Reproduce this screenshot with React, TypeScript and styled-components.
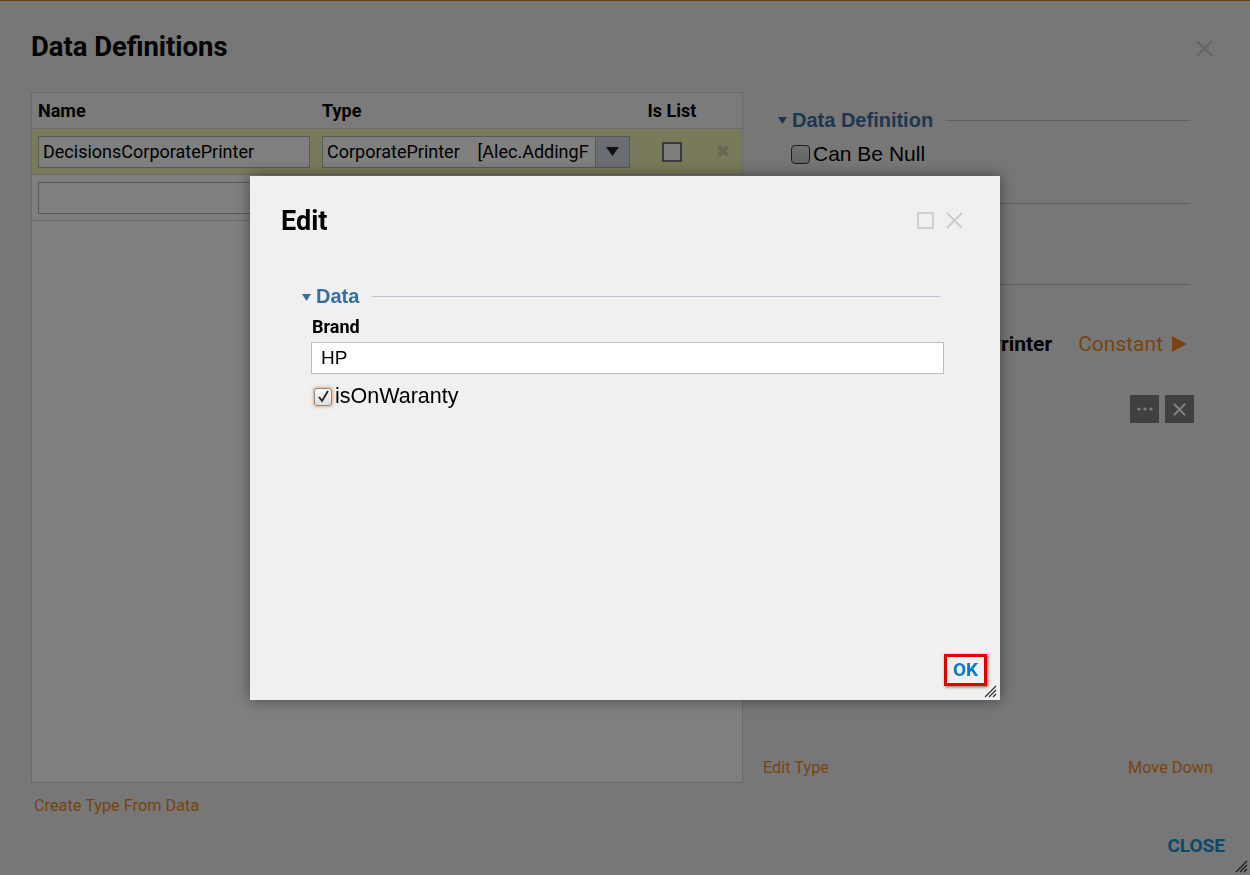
import styled, { createGlobalStyle } from "styled-components";

const GlobalStyle = createGlobalStyle`
  html, body {
    margin: 0;
    padding: 0;
  }
  body {
    font-family: Roboto, "Liberation Sans", Arial, sans-serif;
    background: #eeeeee;
    color: #000;
    overflow: hidden;
  }
  * {
    box-sizing: border-box;
  }
`;

const Page = styled.div`
  position: relative;
  height: 875px;
  border-top: 1px solid #d8801e;
  padding: 0 37px 0 31px;
  display: flex;
  flex-direction: column;
`;

const Header = styled.div`
  height: 91px;
  padding-top: 30px;
  display: flex;
  justify-content: space-between;
  align-items: flex-start;
`;

const Title = styled.h1`
  margin: 0;
  font-size: 27.4px;
  line-height: 32px;
  font-weight: 700;
`;

const IconButton = styled.span<{ $top?: number }>`
  display: inline-flex;
  margin-top: ${(p) => p.$top ?? 0}px;
`;

const Main = styled.div`
  display: grid;
  grid-template-columns: 712px 450px;
  column-gap: 20px;
  height: 691px;
`;

const Table = styled.div`
  border: 1px solid #d4d4d4;
  background: #fefefe;
  display: flex;
  flex-direction: column;
`;

const Row = styled.div<{ $head?: boolean; $selected?: boolean }>`
  display: grid;
  grid-template-columns: 272px 308px 60px 28px;
  column-gap: 12px;
  align-items: center;
  padding-left: 6px;
  height: ${(p) => (p.$head ? 36 : 46)}px;
  background: ${(p) => (p.$selected ? "#f2f2b6" : p.$head ? "#f7f7f7" : "#fefefe")};
  border-bottom: 1px solid #d4d4d4;
`;

const HeadCell = styled.div<{ $center?: boolean }>`
  font-size: 18px;
  font-weight: 700;
  text-align: ${(p) => (p.$center ? "center" : "left")};
`;

const TextInput = styled.div`
  height: 32px;
  border: 1px solid #b0b0b0;
  background: #fff;
  padding: 0 4px;
  font-size: 18px;
  line-height: 30px;
  white-space: nowrap;
  overflow: hidden;
`;

const Select = styled.div`
  height: 32px;
  border: 1px solid #b0b0b0;
  background: #fff;
  display: flex;
  overflow: hidden;
`;

const SelectText = styled.div`
  flex: 1;
  min-width: 0;
  padding: 0 4px;
  font-size: 18px;
  line-height: 30px;
  white-space: pre;
  overflow: hidden;
  text-overflow: clip;
`;

const SelectButton = styled.div`
  width: 34px;
  flex-shrink: 0;
  background: #d4dce4;
  border-left: 1px solid #b0b0b0;
  display: flex;
  align-items: center;
  justify-content: center;
`;

const BoxCheck = styled.div`
  justify-self: center;
  width: 20px;
  height: 20px;
  border: 2px solid #747474;
  background: #fafafa;
`;

const RemoveGlyph = styled.div`
  justify-self: start;
  margin-left: 2px;
  color: #cfcfa4;
  font-size: 17px;
  line-height: 1;
`;

const Side = styled.div`
  display: flex;
  flex-direction: column;
`;

const SectionHeader = styled.div<{ $gap: number; $inset?: number; $endGap?: number }>`
  display: flex;
  align-items: center;
  height: 28px;
  margin-top: ${(p) => p.$gap}px;
  padding-left: ${(p) => p.$inset ?? 15}px;
  margin-right: ${(p) => p.$endGap ?? 23}px;
  color: #3b6ea0;
  font-family: "Liberation Sans", Arial, sans-serif;
  font-size: 20px;
  font-weight: 700;
  white-space: nowrap;
  gap: 5px;

  &::after {
    content: "";
    flex: 1;
    height: 1px;
    margin-left: 8px;
    background: #bfbfcf;
  }
`;

const CheckRow = styled.label<{ $gap: number; $inset: number; $size: number }>`
  display: flex;
  align-items: center;
  gap: 3px;
  height: 24px;
  margin-top: ${(p) => p.$gap}px;
  padding-left: ${(p) => p.$inset}px;
  font-family: "Liberation Sans", Arial, sans-serif;
  font-size: ${(p) => p.$size}px;
`;

const RoundCheck = styled.span`
  width: 19px;
  height: 19px;
  border-radius: 4px;
  border: 1px solid #3a3a3a;
  background: linear-gradient(#e2e2e2, #c8c8c8);
`;

const ValueRow = styled.div`
  display: flex;
  justify-content: flex-end;
  align-items: center;
  gap: 26px;
  height: 28px;
  margin-top: 32px;
  margin-right: 26px;
  white-space: nowrap;
`;

const ValueName = styled.span`
  font-size: 21px;
  font-weight: 700;
`;

const Link = styled.span<{ $size?: number }>`
  display: inline-flex;
  align-items: center;
  gap: 9px;
  color: #f08a24;
  font-size: ${(p) => p.$size ?? 16.3}px;
`;

const ButtonRow = styled.div`
  display: flex;
  justify-content: flex-end;
  gap: 6px;
  margin-top: 37px;
  margin-right: 19px;
`;

const DarkButton = styled.div`
  width: 29px;
  height: 28px;
  background: #808080;
  color: #fff;
  display: flex;
  align-items: center;
  justify-content: center;
`;

const LinksRow = styled.div`
  margin-top: auto;
  margin-bottom: 6px;
  height: 20px;
  display: flex;
  justify-content: space-between;
  align-items: center;
`;

const FooterLink = styled.div`
  height: 20px;
  margin-top: 12px;
  padding-left: 3px;
  display: flex;
  align-items: center;
`;

const CloseRow = styled.div`
  height: 20px;
  margin-top: 20px;
  margin-right: -12px;
  display: flex;
  justify-content: flex-end;
  align-items: center;
`;

const CloseText = styled.span`
  color: #1c90d2;
  font-size: 19px;
  font-weight: 700;
`;

const Grip = styled.div<{ $right: number; $bottom: number }>`
  position: absolute;
  right: ${(p) => p.$right}px;
  bottom: ${(p) => p.$bottom}px;
  display: flex;
`;

const Overlay = styled.div`
  position: fixed;
  inset: 0;
  background: rgba(0, 0, 0, 0.5);
  display: flex;
  align-items: center;
  justify-content: center;
`;

const Modal = styled.div`
  position: relative;
  width: 750px;
  height: 524px;
  background: #f0f0f0;
  box-shadow: 0 0 14px rgba(0, 0, 0, 0.45);
  display: flex;
  flex-direction: column;
`;

const ModalHeader = styled.div`
  padding: 29px 37px 0 31px;
  display: flex;
  justify-content: space-between;
  align-items: center;
`;

const ModalTitle = styled.h2`
  margin: 0;
  font-size: 27px;
  line-height: 32px;
  font-weight: 700;
`;

const ModalTools = styled.div`
  display: flex;
  align-items: center;
  gap: 12px;
`;

const ModalBody = styled.div`
  padding: 0 56px 0 52px;
  display: flex;
  flex-direction: column;
`;

const FieldLabel = styled.div`
  margin-top: 5px;
  padding-left: 10px;
  font-size: 18px;
  line-height: 22px;
  font-weight: 700;
`;

const FieldInput = styled.div`
  margin: 4px 0 0 9px;
  height: 32px;
  border: 1px solid #bdbdbd;
  background: #fff;
  padding: 0 9px;
  font-family: "Liberation Sans", Arial, sans-serif;
  font-size: 19px;
  line-height: 30px;
`;

const TickBox = styled.span`
  width: 18px;
  height: 18px;
  border-radius: 3px;
  border: 1px solid #8a8a8a;
  background: linear-gradient(#fafafa, #dedede);
  box-shadow: 0 0 3px 1px rgba(230, 150, 80, 0.7);
  display: flex;
  align-items: center;
  justify-content: center;
`;

const ModalFooter = styled.div`
  margin-top: auto;
  padding: 0 13px 14px 0;
  display: flex;
  justify-content: flex-end;
`;

const OkButton = styled.div`
  width: 43px;
  height: 32px;
  border: 3px solid #e00000;
  box-shadow: 1px 1px 3px rgba(0, 0, 0, 0.55);
  display: flex;
  align-items: center;
  justify-content: center;
  color: #0a7cc4;
  font-size: 19px;
  font-weight: 700;
`;

const Cross = ({ size, color, width }: { size: number; color: string; width: number }) => (
  <svg width={size} height={size} viewBox="0 0 16 16">
    <path d="M1 1 L15 15 M15 1 L1 15" stroke={color} strokeWidth={width} fill="none" />
  </svg>
);

const Caret = ({ color }: { color: string }) => (
  <svg width="9" height="8" viewBox="0 0 9 8">
    <path d="M0 1 L9 1 L4.5 8 Z" fill={color} />
  </svg>
);

const ResizeGrip = () => (
  <svg width="14" height="14" viewBox="0 0 14 14">
    <path d="M13 2 L2 13 M13 6 L6 13 M13 10 L10 13" stroke="#333" strokeWidth="1.2" />
  </svg>
);

const App = () => {
  return (
    <>
      <GlobalStyle />
      <Page>
        <Header>
          <Title>Data Definitions</Title>
          <IconButton $top={9}>
            <Cross size={17} color="#c8c8c8" width={2} />
          </IconButton>
        </Header>

        <Main>
          <Table>
            <Row $head>
              <HeadCell>Name</HeadCell>
              <HeadCell>Type</HeadCell>
              <HeadCell $center>Is List</HeadCell>
              <span />
            </Row>
            <Row $selected>
              <TextInput>DecisionsCorporatePrinter</TextInput>
              <Select>
                <SelectText>{"CorporatePrinter    [Alec.AddingF"}</SelectText>
                <SelectButton>
                  <svg width="13" height="9" viewBox="0 0 13 9">
                    <path d="M0 0 L13 0 L6.5 9 Z" fill="#222" />
                  </svg>
                </SelectButton>
              </Select>
              <BoxCheck />
              <RemoveGlyph>✖</RemoveGlyph>
            </Row>
            <Row>
              <TextInput />
              <Select>
                <SelectText />
                <SelectButton />
              </Select>
              <BoxCheck />
              <span />
            </Row>
          </Table>

          <Side>
            <SectionHeader $gap={14}>
              <Caret color="#3b6ea0" />
              Data Definition
            </SectionHeader>
            <CheckRow $gap={8} $inset={28} $size={21}>
              <RoundCheck />
              Can Be Null
            </CheckRow>
            <SectionHeader $gap={23}>
              <Caret color="#3b6ea0" />
              Type Settings
            </SectionHeader>
            <SectionHeader $gap={53}>
              <Caret color="#3b6ea0" />
              Default Value
            </SectionHeader>
            <ValueRow>
              <ValueName>DecisionsCorporatePrinter</ValueName>
              <Link $size={21}>
                Constant
                <svg width="15" height="16" viewBox="0 0 15 16">
                  <path d="M0 0 L15 8 L0 16 Z" fill="#f08a24" />
                </svg>
              </Link>
            </ValueRow>
            <ButtonRow>
              <DarkButton>
                <svg width="16" height="4" viewBox="0 0 16 4">
                  <circle cx="2" cy="2" r="1.6" fill="#fff" />
                  <circle cx="8" cy="2" r="1.6" fill="#fff" />
                  <circle cx="14" cy="2" r="1.6" fill="#fff" />
                </svg>
              </DarkButton>
              <DarkButton>
                <Cross size={13} color="#fff" width={2.4} />
              </DarkButton>
            </ButtonRow>
            <LinksRow>
              <Link>Edit Type</Link>
              <Link>Move Down</Link>
            </LinksRow>
          </Side>
        </Main>

        <FooterLink>
          <Link>Create Type From Data</Link>
        </FooterLink>
        <CloseRow>
          <CloseText>CLOSE</CloseText>
        </CloseRow>
        <Grip $right={2} $bottom={2}>
          <ResizeGrip />
        </Grip>
      </Page>

      <Overlay>
        <Modal>
          <ModalHeader>
            <ModalTitle>Edit</ModalTitle>
            <ModalTools>
              <svg width="17" height="17" viewBox="0 0 17 17">
                <rect x="1" y="1" width="15" height="15" stroke="#c8c8c8" strokeWidth="1.6" fill="none" />
              </svg>
              <Cross size={17} color="#c8c8c8" width={1.6} />
            </ModalTools>
          </ModalHeader>
          <ModalBody>
            <SectionHeader $gap={46} $inset={0} $endGap={4}>
              <Caret color="#3b6ea0" />
              Data
            </SectionHeader>
            <FieldLabel>Brand</FieldLabel>
            <FieldInput>HP</FieldInput>
            <CheckRow $gap={11} $inset={12} $size={21.5}>
              <TickBox>
                <svg width="13" height="13" viewBox="0 0 13 13">
                  <path d="M2 7 L5 11 L11 1" stroke="#222" strokeWidth="1.8" fill="none" />
                </svg>
              </TickBox>
              isOnWaranty
            </CheckRow>
          </ModalBody>
          <ModalFooter>
            <OkButton>OK</OkButton>
          </ModalFooter>
          <Grip $right={3} $bottom={2}>
            <ResizeGrip />
          </Grip>
        </Modal>
      </Overlay>
    </>
  );
};

export default App;
